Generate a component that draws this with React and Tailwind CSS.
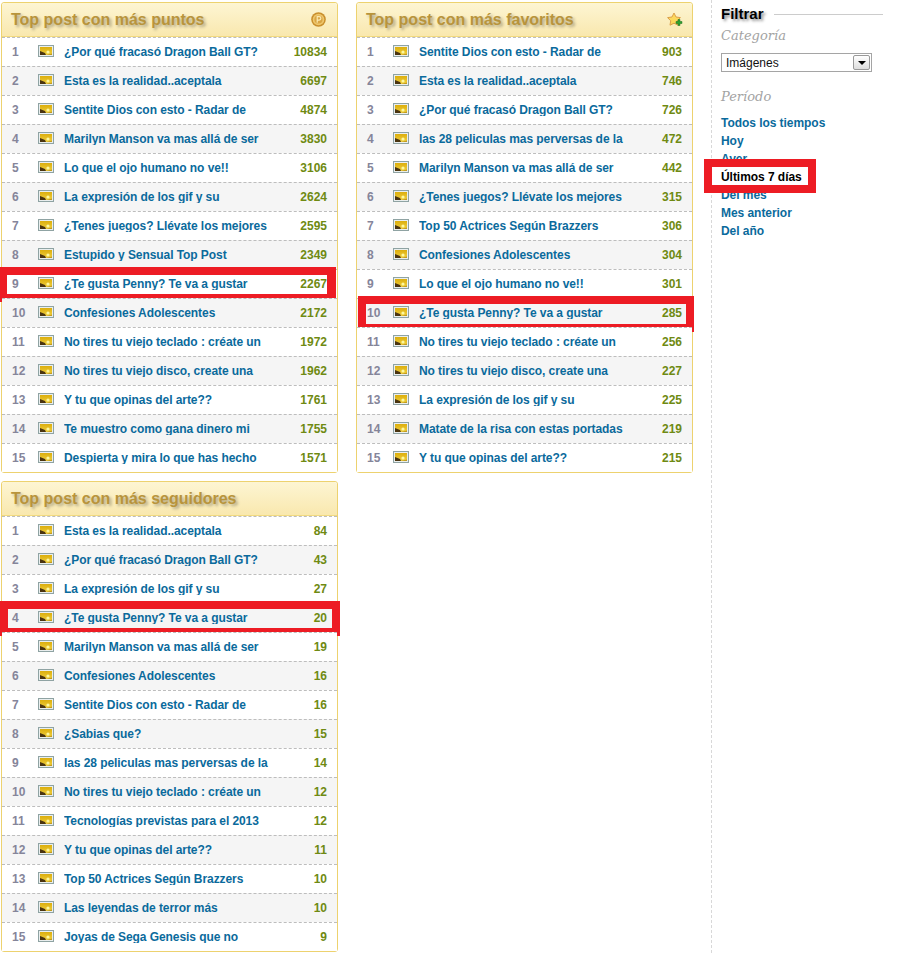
const puntos = [["¿Por qué fracasó Dragon Ball GT?",10834],["Esta es la realidad..aceptala",6697],["Sentite Dios con esto - Radar de",4874],["Marilyn Manson va mas allá de ser",3830],["Lo que el ojo humano no ve!!",3106],["La expresión de los gif y su",2624],["¿Tenes juegos? Llévate los mejores",2595],["Estupido y Sensual Top Post",2349],["¿Te gusta Penny? Te va a gustar",2267],["Confesiones Adolescentes",2172],["No tires tu viejo teclado : créate un",1972],["No tires tu viejo disco, create una",1962],["Y tu que opinas del arte??",1761],["Te muestro como gana dinero mi",1755],["Despierta y mira lo que has hecho",1571]];
const favoritos = [["Sentite Dios con esto - Radar de",903],["Esta es la realidad..aceptala",746],["¿Por qué fracasó Dragon Ball GT?",726],["las 28 peliculas mas perversas de la",472],["Marilyn Manson va mas allá de ser",442],["¿Tenes juegos? Llévate los mejores",315],["Top 50 Actrices Según Brazzers",306],["Confesiones Adolescentes",304],["Lo que el ojo humano no ve!!",301],["¿Te gusta Penny? Te va a gustar",285],["No tires tu viejo teclado : créate un",256],["No tires tu viejo disco, create una",227],["La expresión de los gif y su",225],["Matate de la risa con estas portadas",219],["Y tu que opinas del arte??",215]];
const seguidores = [["Esta es la realidad..aceptala",84],["¿Por qué fracasó Dragon Ball GT?",43],["La expresión de los gif y su",27],["¿Te gusta Penny? Te va a gustar",20],["Marilyn Manson va mas allá de ser",19],["Confesiones Adolescentes",16],["Sentite Dios con esto - Radar de",16],["¿Sabias que?",15],["las 28 peliculas mas perversas de la",14],["No tires tu viejo teclado : créate un",12],["Tecnologías previstas para el 2013",12],["Y tu que opinas del arte??",11],["Top 50 Actrices Según Brazzers",10],["Las leyendas de terror más",10],["Joyas de Sega Genesis que no",9]];

function ImageIcon() {
  return (
    <svg width="16" height="12" viewBox="0 0 16 12" className="shrink-0 mb-[2px]">
      <defs>
        <linearGradient id="sky" x1="0" y1="0" x2="0" y2="1">
          <stop offset="0" stopColor="#dcae0c" />
          <stop offset="1" stopColor="#f0d040" />
        </linearGradient>
      </defs>
      <rect x="0.5" y="0.5" width="15" height="11" fill="#e9eeee" stroke="#8fa3a3" />
      <rect x="2" y="2" width="12" height="8" fill="url(#sky)" />
      <path d="M2 6 L7 8 L8 10 L2 10 Z" fill="#4a3410" />
      <circle cx="10" cy="7" r="1.6" fill="#fdf8a0" />
      <path d="M8 10 L14 8.5 L14 10 Z" fill="#c09a20" />
    </svg>
  );
}

function Coin() {
  return (
    <svg width="15" height="15" viewBox="0 0 14 14" className="mr-[2px]">
      <circle cx="7" cy="7" r="6.8" fill="#c98f2c" />
      <circle cx="7" cy="7" r="5.4" fill="#eec66c" />
      <circle cx="7" cy="7" r="3.8" fill="#d9a544" />
      <path d="M5.8 10V4.3h1.8a1.6 1.6 0 0 1 0 3.2H5.8" fill="none" stroke="#fbe9b0" strokeWidth="1.1" />
    </svg>
  );
}

function StarPlus() {
  return (
    <svg width="16" height="16" viewBox="0 0 16 16">
      <path d="M7 1 L9 5 L13.4 5.6 L10.3 8.8 L11 13.2 L7 11.2 L3 13.2 L3.7 8.8 L0.6 5.6 L5 5 Z" fill="#fbd85c" stroke="#dba04a" strokeWidth="1" strokeLinejoin="round" />
      <path d="M11 7.5h2v2h2v2h-2v2h-2v-2H9v-2h2z" fill="#2fa32f" stroke="#1d6e1d" strokeWidth="0.5" />
    </svg>
  );
}

function Row({ i, title, n, mark }) {
  return (
    <li className={`relative h-[29px] flex items-center border-t border-dashed border-[#bdbdbd] pl-[10px] pr-[10px] ${i % 2 === 1 ? "bg-[#f5f5f5]" : "bg-white"}`}>
      <span className="w-[26px] text-[#85859a] shrink-0">{i + 1}</span>
      <ImageIcon />
      <span className="ml-[10px] flex-1 truncate text-[#0a6a9c] tracking-[-0.07px]">{title}</span>
      <span className="text-[#6f8a12]">{n}</span>
      {mark && <div className={`absolute ${mark} border-[#ed1c24] pointer-events-none`} />}
    </li>
  );
}

function Panel({ title, icon, items, markAt, mark }) {
  return (
    <section className="h-[471px] border border-[#edd26f] rounded-[3px] bg-white">
      <header className="h-[34px] flex items-center justify-between pl-[9px] pr-[9px] bg-gradient-to-b from-[#fdf5d3] to-[#f9e8ae] border-b border-[#f2da80] rounded-t-[3px]">
        <h2 className="text-[16px] font-bold text-[#b8943c] [text-shadow:2px_2px_3px_rgba(0,0,0,0.3)]">{title}</h2>
        {icon}
      </header>
      <ol className="text-[12px] font-bold leading-none">
        {items.map(([t, n], i) => (
          <Row key={i} i={i} title={t} n={n} mark={i === markAt ? mark : null} />
        ))}
      </ol>
    </section>
  );
}

const links = ["Todos los tiempos", "Hoy", "Ayer", "Últimos 7 días", "Del mes", "Mes anterior", "Del año"];

export default function App() {
  return (
    <div className="w-[908px] h-[953px] bg-white flex font-['Liberation_Sans',Arial,sans-serif] overflow-hidden">
      <main className="w-[711px] pl-px pt-[2px] shrink-0">
        <div className="grid grid-cols-[337px_337px] gap-x-[18px] gap-y-[8px]">
          <Panel title="Top post con más puntos" icon={<Coin />} items={puntos} markAt={8} mark="-left-[2px] right-[1px] -top-[3px] h-[35px] border-l-[7px] border-r-[9px] border-y-[8px]" />
          <Panel title="Top post con más favoritos" icon={<StarPlus />} items={favoritos} markAt={9} mark="left-[1px] -right-[2px] -top-[3px] h-[36px] border-x-[8px] border-y-[8px]" />
          <Panel title="Top post con más seguidores" items={seguidores} markAt={3} mark="-left-[2px] -right-[3px] -top-[3px] h-[35px] border-x-[8px] border-y-[8px]" />
        </div>
      </main>
      <aside className="w-[172px] h-full border-l border-dashed border-[#d8d8d8] pl-[9px] shrink-0">
        <div className="flex items-center h-[14px] mt-[7px]">
          <h3 className="text-[15px] font-bold text-black [text-shadow:2px_2px_3px_rgba(0,0,0,0.45)] shrink-0">Filtrar</h3>
          <div className="ml-[10px] flex-1 h-px bg-[#cccccc]" />
        </div>
        <h4 className="mt-[6px] text-[13px] leading-[18px] italic font-['DejaVu_Serif',Georgia,serif] text-[#a3a3a3]">Categoría</h4>
        <div className="mt-[8px] w-[151px] h-[19px] border border-[#a5a5a5] flex items-center justify-between pl-[4px] pr-px text-[12px] text-[#111]">
          <span>Imágenes</span>
          <span className="w-[17px] h-[15px] border border-[#999] rounded-[2px] bg-gradient-to-b from-white to-[#dddddd] flex items-center justify-center">
            <span className="w-0 h-0 border-x-[4px] border-x-transparent border-t-[4px] border-t-black" />
          </span>
        </div>
        <h4 className="mt-[16px] text-[13px] leading-[18px] italic font-['DejaVu_Serif',Georgia,serif] text-[#a3a3a3]">Período</h4>
        <ul className="mt-[8px] text-[12px] font-bold leading-[18px] text-[#0a6a9c] tracking-[-0.05px]">
          {links.map((l) => (
            l === "Últimos 7 días" ? (
              <li key={l} className="relative h-[18px] text-black">
                <div className="absolute left-[-17px] top-[-9px] w-[112px] h-[34px] bg-white border-[8px] border-[#ed1c24]" />
                <span className="relative">{l}</span>
              </li>
            ) : (
              <li key={l} className="h-[18px]">{l}</li>
            )
          ))}
        </ul>
      </aside>
    </div>
  );
}
